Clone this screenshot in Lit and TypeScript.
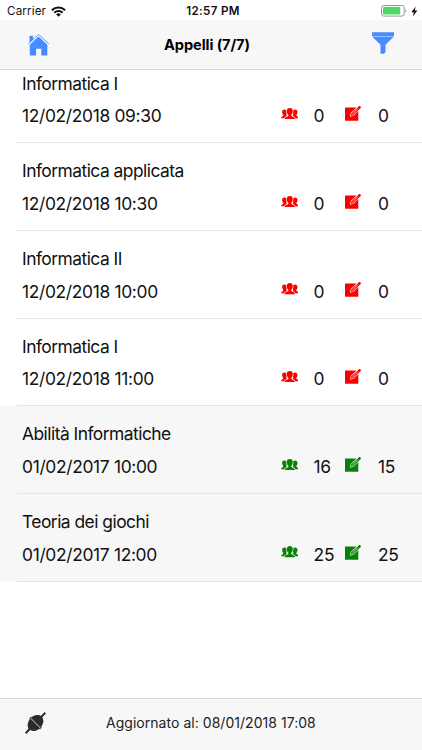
import { LitElement, html, css, svg } from "lit";
import { customElement } from "lit/decorators.js";
import { classMap } from "lit/directives/class-map.js";

interface Exam {
  name: string;
  date: string;
  enrolled: number;
  graded: number;
  past?: boolean;
}

const exams: Exam[] = [
  { name: "Informatica I", date: "12/02/2018 09:30", enrolled: 0, graded: 0 },
  { name: "Informatica applicata", date: "12/02/2018 10:30", enrolled: 0, graded: 0 },
  { name: "Informatica II", date: "12/02/2018 10:00", enrolled: 0, graded: 0 },
  { name: "Informatica I", date: "12/02/2018 11:00", enrolled: 0, graded: 0 },
  { name: "Abilità Informatiche", date: "01/02/2017 10:00", enrolled: 16, graded: 15, past: true },
  { name: "Teoria dei giochi", date: "01/02/2017 12:00", enrolled: 25, graded: 25, past: true },
];

const people = svg`
  <path d="M8.800 0C6.600 0 5.700 1.300 5.800 3.200c.1 1.700.7 2.900 1.500 3.600v1.100C6.700 8.500 3.800 8.700 3.400 11.300h10.800c-.4-2.600-3.300-2.800-3.900-3.400V6.800c.8-.7 1.400-1.900 1.500-3.600C11.900 1.300 11 0 8.800 0z"/>
  <path d="M3.500 1.400C1.800 1.400 1 2.600 1.100 4.200c.1 1.200.5 2.100 1.100 2.700v.8C1.900 8.300.3 8.300 0 10.300h3.100c.6-1.300 1.800-2 3.300-2.500-.7-.2-1.200-.5-1.200-.9.200-.4.3-.8.400-1.300-.4-1.100-.5-2.300-.3-3.400-.4-.6-1-.8-1.800-.8z"/>
  <path d="M14.100 1.400c1.700 0 2.500 1.200 2.400 2.800-.1 1.200-.5 2.100-1.100 2.700v.8c.3.600 1.900.6 2.200 2.600h-3.100c-.6-1.300-1.800-2-3.300-2.500.7-.2 1.200-.5 1.200-.9-.2-.4-.3-.8-.4-1.300.4-1.100.5-2.300.3-3.400.4-.6 1-.8 1.800-.8z"/>`;

@customElement("app-root")
export class AppRoot extends LitElement {
  static styles = css`
    :host {
      display: flex;
      flex-direction: column;
      width: 422px;
      height: 750px;
      overflow: hidden;
      background: #fff;
      color: #111;
      font-family: Inter, Roboto, sans-serif;
    }
    svg { display: block; flex: none; }
    .status {
      flex: none;
      box-sizing: border-box;
      height: 20px;
      display: grid;
      grid-template-columns: 1fr auto 1fr;
      align-items: center;
      padding: 2px 4px 0 7px;
      font-size: 11.6px;
      line-height: 18px;
      color: #111;
    }
    .carrier { display: flex; align-items: center; gap: 5px; letter-spacing: 0.16px; }
    .clock { font-weight: 600; letter-spacing: 0.33px; padding-left: 1px; }
    .power { display: flex; align-items: center; justify-content: flex-end; gap: 4px; }
    .bar {
      flex: none;
      box-sizing: border-box;
      height: 50px;
      display: grid;
      grid-template-columns: 1fr auto 1fr;
      align-items: center;
      padding: 0 28px;
      background: #f7f7f7;
      border-bottom: 1px solid #dadada;
      color: #488aff;
    }
    .title { font-size: 14.6px; font-weight: 700; color: #000; letter-spacing: -0.08px; padding: 1px 8px 0 0; }
    .funnel { justify-self: end; margin-top: -3px; }
    .list { flex: 1; min-height: 0; overflow: hidden; }
    .rows { margin-top: -14.3px; }
    .row { padding-left: 17px; height: 87.65px; }
    .past { background: #f7f7f7; }
    .inner {
      box-sizing: border-box;
      height: 100%;
      padding: 16px 0 0 5px;
      border-bottom: 1px solid #e4e5e7;
      font-size: 17.4px;
      line-height: 24px;
    }
    .name { letter-spacing: -0.52px; }
    .line { display: grid; grid-template-columns: 258.6px 33px 31.4px 33px 1fr; align-items: center; margin-top: 8.6px; }
    .date { letter-spacing: -0.33px; }
    .count { letter-spacing: -0.3px; }
    .icon { color: #fa0000; }
    .green .icon { color: #078207; }
    .people { margin-top: -5px; }
    .edit { margin-top: -5px; }
    .footer {
      flex: none;
      box-sizing: border-box;
      height: 52px;
      display: flex;
      align-items: center;
      padding: 0 25px 3px;
      background: #f7f7f7;
      border-top: 1px solid #dadada;
      color: #222;
    }
    .plug { margin-top: -1px; }
    .updated { margin-left: 60px; font-size: 14px; line-height: 20px; letter-spacing: 0.035px; white-space: nowrap; }
  `;

  private peopleIcon() {
    return html`<svg class="icon people" width="17.6" height="11.3" viewBox="0 0 17.6 11.3" fill="currentColor">${people}</svg>`;
  }

  private editIcon() {
    return html`<svg class="icon edit" width="16" height="15" viewBox="0 0 16 15" fill="none">
      <path fill="currentColor" d="M0 1.500h11.400L5.800 7.100 4.800 10.700 8.500 9.700 13.300 4.900V14.700H0z"/>
      <path fill="currentColor" d="M14 .3c.4-.4.900-.3 1.300 0l.4.4c.4.4.3.900 0 1.200L8.200 9.200l-2.700.8.8-2.700z"/>
      <path stroke="#fff" stroke-width=".7" d="M7 8.500 12.900 2.600"/>
    </svg>`;
  }

  private renderExam(e: Exam) {
    return html`<div class=${classMap({ row: true, past: !!e.past, green: !!e.past })}>
      <div class="inner">
        <div class="name">${e.name}</div>
        <div class="line">
          <span class="date">${e.date}</span>
          ${this.peopleIcon()}<span class="count">${e.enrolled}</span>
          ${this.editIcon()}<span class="count">${e.graded}</span>
        </div>
      </div>
    </div>`;
  }

  render() {
    return html`
      <div class="status">
        <div class="carrier">
          <span>Carrier</span>
          <svg width="15" height="11" viewBox="0 0 15 11" fill="none" stroke="#111" stroke-width="2">
            <path d="M.9 4.200a9.400 9.400 0 0 1 13.200 0M3.300 6.700a6 6 0 0 1 8.400 0"/>
            <path fill="#111" stroke="none" d="M7.500 10.700 5.200 8.400a3.300 3.300 0 0 1 4.600 0z"/>
          </svg>
        </div>
        <div class="clock">12:57 PM</div>
        <div class="power">
          <svg width="26" height="12" viewBox="0 0 26 12">
            <rect x=".5" y=".5" width="22.7" height="10.6" rx="2.2" fill="#fff" stroke="#999"/>
            <rect x="2" y="2" width="17.3" height="7.6" rx=".8" fill="#4cd964"/>
            <path d="M24.400 4v3.600c1.300-.5 1.300-3.100 0-3.600z" fill="#999"/>
          </svg>
          <svg width="7" height="11" viewBox="0 0 7 11"><path fill="#111" d="M4.700.4.300 6.200h2.500l-1 4.400L6.400 4.600H3.800z"/></svg>
        </div>
      </div>
      <div class="bar">
        <svg width="22" height="22" viewBox="0 0 22 22" fill="currentColor">
          <path d="M10.500 2.400 19.300 10.800v10.700h-6v-6.800H8.100v6.800H1.800V10.800z"/>
          <path d="M1.500 1.800h3.600v3.600L1.500 8.900z"/>
          <path d="M.4 9.800 10.500.5l10.300 9.300" fill="none" stroke="currentColor" stroke-width=".9"/>
        </svg>
        <div class="title">Appelli (7/7)</div>
        <svg class="funnel" width="22" height="22" viewBox="0 0 22 22" fill="currentColor">
          <path d="M0 .3h22v3.600H0zM0 4.600h22l-8.500 8.200v7.200l-1.500 1.800H8.500v-9z"/>
        </svg>
      </div>
      <div class="list"><div class="rows">${exams.map((e) => this.renderExam(e))}</div></div>
      <div class="footer">
        <svg class="plug" width="21" height="22" viewBox="0 0 21 22" fill="none">
          <path d="M.7 21.200 5.500 16M15.200 6 20.400.8" stroke="#2b2b2b" stroke-width="2"/>
          <ellipse cx="10.5" cy="11" rx="8.9" ry="6.8" transform="rotate(-47 10.5 11)" fill="#2b2b2b"/>
          <path d="M5 5.400 16 16.700" stroke="#2b2b2b" stroke-width="2.4"/>
          <path d="M5 5.400 16 16.700" stroke="#f7f7f7" stroke-width=".8"/>
        </svg>
        <div class="updated">Aggiornato al: 08/01/2018 17:08</div>
      </div>`;
  }
}
